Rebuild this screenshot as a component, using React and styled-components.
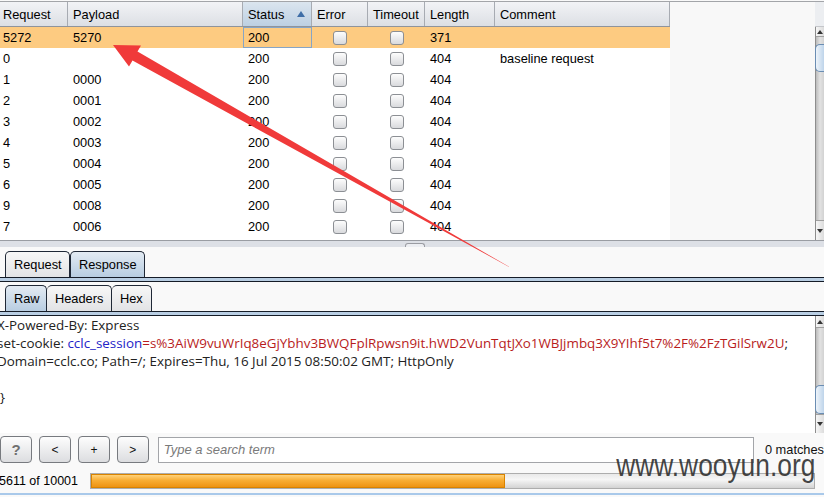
import React from 'react';
import styled, { createGlobalStyle } from 'styled-components';

const Global = createGlobalStyle`
  html, body { margin: 0; padding: 0; }
  body {
    width: 824px; height: 497px; overflow: hidden; background: #fafafa;
    font-family: "Liberation Sans", Arial, sans-serif;
  }
`;

const COLS = '68px 175px 69px 56px 57px 70px 175px';

const Frame = styled.div`
  position: relative;
  width: 824px;
  height: 497px;
  overflow: hidden;
  background: #f9f9f9;
  display: flex;
  flex-direction: column;
`;

const TopPane = styled.div`
  margin-top: 1px;
  height: 238px;
  border-top: 1px solid #a3a5a9;
  border-bottom: 1px solid #9a9da3;
  display: flex;
  flex-shrink: 0;
`;

const TableArea = styled.div`
  flex: 1;
  background: #f8f8f8;
  overflow: hidden;
`;

const Table = styled.div`
  width: 670px;
  background: #fff;
  height: 100%;
`;

const HeaderRow = styled.div`
  display: grid;
  grid-template-columns: ${COLS};
  height: 25px;
  box-sizing: border-box;
  border-bottom: 1px solid #8f949c;
`;

const HeadCell = styled.div`
  box-sizing: border-box;
  border-right: 1px solid #a7abb2;
  padding-left: ${p => p.$pl ?? 5}px;
  padding-right: 6px;
  font-size: 12.8px;
  color: #000;
  display: flex;
  align-items: center;
  justify-content: space-between;
  white-space: nowrap;
  overflow: hidden;
  background: ${p => p.$active
    ? 'linear-gradient(#dbe5ef, #bdd0e2)'
    : 'linear-gradient(#f2f3f6, #dcdfe4)'};
`;

const SortArrow = styled.span`
  width: 0; height: 0;
  border-left: 4px solid transparent;
  border-right: 4px solid transparent;
  border-bottom: 6px solid #3f6ea7;
`;

const Body = styled.div`
  height: 213px;
  overflow: hidden;
`;

const Row = styled.div`
  display: grid;
  grid-template-columns: ${COLS};
  height: 21px;
  background: ${p => (p.$selected ? '#fdcb81' : '#fff')};
`;

const Cell = styled.div`
  box-sizing: border-box;
  padding-left: ${p => p.$pl ?? 5}px;
  font-size: 12.8px;
  line-height: ${p => (p.$focus ? 19 : 21)}px;
  color: #000;
  white-space: nowrap;
  overflow: hidden;
  border: ${p => (p.$focus ? '1px solid #86a5c6' : 'none')};
  ${p => p.$focus && 'padding-left: 4px;'}
`;

const CheckCell = styled.div`
  display: flex;
  align-items: center;
  justify-content: center;
`;

const Checkbox = styled.div`
  width: 14px;
  height: 14px;
  box-sizing: border-box;
  border: 1px solid #8c8f94;
  border-radius: 3px;
  background: linear-gradient(#fdfdfd, #d9dadd);
`;

const VScroll = styled.div`
  width: 9px;
  flex-shrink: 0;
  display: flex;
  flex-direction: column;
  box-sizing: border-box;
  border-left: 1px solid #8d8d8d;
  background: linear-gradient(90deg, #bcbcbc, #e2e2e2 50%, #d2d2d2);
`;

const ScrollCorner = styled.div`
  height: 25px;
  background: #eceef1;
  border-bottom: 1px solid #c4c6ca;
  box-sizing: border-box;
  margin-left: -1px;
`;

const ScrollArrow = styled.div`
  height: ${p => p.$h}px;
  flex-shrink: 0;
  background: linear-gradient(90deg, #f6f6f6, #dcdcdc);
  display: flex;
  align-items: center;
  justify-content: center;
  box-sizing: border-box;
  ${p => (p.$down ? 'border-top: 1px solid #a0a0a0;' : 'border-bottom: 1px solid #a0a0a0;')}
`;

const ArrowGlyph = styled.div`
  width: 0; height: 0;
  border-left: 3px solid transparent;
  border-right: 3px solid transparent;
  ${p => (p.$down ? 'border-top: 4px solid #333;' : 'border-bottom: 4px solid #333;')}
`;

const Track = styled.div`
  flex: 1;
  padding-top: ${p => p.$offset}px;
`;

const Thumb = styled.div`
  height: ${p => p.$h}px;
  margin-left: -1px;
  box-sizing: border-box;
  border: 1px solid #6a8db3;
  border-right: none;
  border-radius: 5px 0 0 5px;
  background: linear-gradient(90deg, #eef4fa, #bed4ea);
`;

const Splitter = styled.div`
  height: 6px;
  flex-shrink: 0;
  background: #dde0e6;
  display: flex;
  align-items: flex-end;
  padding-left: 405px;
`;

const SplitHandle = styled.div`
  width: 18px;
  height: 3px;
  border: 1px solid #9a9ca2;
  border-bottom: none;
  border-radius: 3px 3px 0 0;
  background: #eceef2;
`;

const TabRow = styled.div`
  display: flex;
  padding-left: 5px;
  margin-top: ${p => p.$mt}px;
  height: 26px;
  flex-shrink: 0;
`;

const Tab = styled.div`
  width: ${p => p.$w}px;
  height: 26px;
  box-sizing: border-box;
  border: 1px solid #1f2836;
  border-bottom: none;
  ${p => (p.$joined ? 'border-left: none;' : '')}
  border-radius: 5px 5px 0 0;
  padding-left: 8px;
  font-size: 12.8px;
  line-height: 26px;
  color: #000;
  white-space: nowrap;
  background: ${p => (p.$active
    ? 'linear-gradient(#e3ebf3, #b8cde1)'
    : 'linear-gradient(#f7f7f7, #e2e3e5)')};
`;

const TabBand = styled.div`
  height: 5px;
  flex-shrink: 0;
  box-sizing: border-box;
  border-top: 1px solid #151c27;
  border-bottom: 1px solid #151c27;
  background: #b9cee3;
`;

const TextArea = styled.div`
  height: 117px;
  flex-shrink: 0;
  display: flex;
  background: #fff;
`;

const TextContent = styled.div`
  flex: 1;
  overflow: hidden;
  font-family: "Open Sans", "Noto Sans", sans-serif;
  font-size: 13.4px;
  line-height: 18px;
  color: #222;
  white-space: pre;
`;

const TextLine = styled.div`
  margin-left: ${p => (p.$flush ? 0 : -3)}px;
  height: 18px;
`;

const Key = styled.span`
  color: #2323c8;
`;

const Val = styled.span`
  color: #b81c1c;
`;

const Toolbar = styled.div`
  margin-top: 3px;
  height: 27px;
  flex-shrink: 0;
  display: flex;
  align-items: center;
  gap: 7px;
`;

const ToolButton = styled.div`
  width: 32px;
  height: 27px;
  box-sizing: border-box;
  border: 1px solid #777a7f;
  border-radius: 4px;
  background: linear-gradient(#fdfdfd, #dcdde0);
  display: flex;
  align-items: center;
  justify-content: center;
  font-size: ${p => (p.$help ? 15 : 12)}px;
  font-weight: ${p => (p.$help ? 'bold' : 'normal')};
  color: ${p => (p.$help ? '#707070' : '#111')};
`;

const SearchInput = styled.input`
  margin-left: 2px;
  width: 597px;
  height: 26px;
  box-sizing: border-box;
  border: 1px solid #a3a5a9;
  background: #fff;
  padding: 0 5px;
  font-family: "Liberation Sans", Arial, sans-serif;
  font-size: 13px;
  outline: none;
  &::placeholder { color: #7a7a7a; font-style: italic; }
`;

const Matches = styled.div`
  margin-left: 4px;
  font-size: 12.8px;
  color: #111;
  white-space: nowrap;
`;

const StatusRow = styled.div`
  margin-top: 10px;
  height: 16px;
  flex-shrink: 0;
  display: flex;
  align-items: center;
`;

const CountText = styled.div`
  width: 91px;
  margin-left: -1px;
  font-size: 12.5px;
  color: #000;
  white-space: nowrap;
`;

const ProgressBar = styled.div`
  flex: 1;
  margin-right: 9px;
  height: 16px;
  box-sizing: border-box;
  border: 1px solid #adadad;
  background: linear-gradient(#e9e9e9, #f6f6f6 40%, #d3d3d3);
  display: flex;
`;

const ProgressFill = styled.div`
  width: ${p => p.$pct}%;
  height: 100%;
  box-sizing: border-box;
  border: 1px solid #d98300;
  background: linear-gradient(#ffd27a, #f8ad34 45%, #ee9312);
`;

const BottomLine = styled.div`
  margin-top: 4px;
  height: 2px;
  background: #a9c9ea;
`;

const Watermark = styled.div`
  position: absolute;
  right: 9px;
  top: 450px;
  font-family: "Liberation Sans", Arial, sans-serif;
  font-size: 31px;
  line-height: 31px;
  color: rgba(44, 44, 44, 0.88);
  transform: scaleX(0.85);
  transform-origin: right center;
  white-space: nowrap;
  pointer-events: none;
`;

const Overlay = styled.svg`
  position: absolute;
  left: 0;
  top: 0;
  pointer-events: none;
`;

const rows = [
  { r: '5272', p: '5270', s: '200', l: '371', c: '', sel: true },
  { r: '0', p: '', s: '200', l: '404', c: 'baseline request' },
  { r: '1', p: '0000', s: '200', l: '404', c: '' },
  { r: '2', p: '0001', s: '200', l: '404', c: '' },
  { r: '3', p: '0002', s: '200', l: '404', c: '' },
  { r: '4', p: '0003', s: '200', l: '404', c: '' },
  { r: '5', p: '0004', s: '200', l: '404', c: '' },
  { r: '6', p: '0005', s: '200', l: '404', c: '' },
  { r: '9', p: '0008', s: '200', l: '404', c: '' },
  { r: '7', p: '0006', s: '200', l: '404', c: '' },
];

function Scrollbar({ corner, topH, offset, thumbH, bottomH }) {
  return (
    <VScroll>
      {corner && <ScrollCorner />}
      <ScrollArrow $h={topH}><ArrowGlyph /></ScrollArrow>
      <Track $offset={offset}><Thumb $h={thumbH} /></Track>
      <ScrollArrow $h={bottomH} $down><ArrowGlyph $down /></ScrollArrow>
    </VScroll>
  );
}

export default function App() {
  return (
    <Frame>
      <Global />
      <TopPane>
        <TableArea>
          <Table>
            <HeaderRow>
              <HeadCell $pl={3}>Request</HeadCell>
              <HeadCell>Payload</HeadCell>
              <HeadCell $active>Status<SortArrow /></HeadCell>
              <HeadCell>Error</HeadCell>
              <HeadCell>Timeout</HeadCell>
              <HeadCell>Length</HeadCell>
              <HeadCell>Comment</HeadCell>
            </HeaderRow>
            <Body>
              {rows.map((row, i) => (
                <Row key={i} $selected={row.sel}>
                  <Cell $pl={3}>{row.r}</Cell>
                  <Cell>{row.p}</Cell>
                  <Cell $focus={row.sel}>{row.s}</Cell>
                  <CheckCell><Checkbox /></CheckCell>
                  <CheckCell><Checkbox /></CheckCell>
                  <Cell>{row.l}</Cell>
                  <Cell>{row.c}</Cell>
                </Row>
              ))}
            </Body>
          </Table>
        </TableArea>
        <Scrollbar corner topH={10} offset={7} thumbH={28} bottomH={20} />
      </TopPane>

      <Splitter><SplitHandle /></Splitter>

      <TabRow $mt={4}>
        <Tab $w={65}>Request</Tab>
        <Tab $w={75} $active>Response</Tab>
      </TabRow>
      <TabBand />

      <TabRow $mt={3}>
        <Tab $w={42} $active>Raw</Tab>
        <Tab $w={65} $joined>Headers</Tab>
        <Tab $w={40} $joined>Hex</Tab>
      </TabRow>
      <TabBand />

      <TextArea>
        <TextContent>
          <TextLine>X-Powered-By: Express</TextLine>
          <TextLine>
            set-cookie: <Key>cclc_session</Key>
            <Val>=s%3AiW9vuWrIq8eGjYbhv3BWQFplRpwsn9it.hWD2VunTqtJXo1WBJjmbq3X9YIhf5t7%2F%2FzTGilSrw2U</Val>;
          </TextLine>
          <TextLine>Domain=cclc.co; Path=/; Expires=Thu, 16 Jul 2015 08:50:02 GMT; HttpOnly</TextLine>
          <TextLine />
          <TextLine $flush>{'}'}</TextLine>
        </TextContent>
        <Scrollbar topH={12} offset={57} thumbH={29} bottomH={19} />
      </TextArea>

      <Toolbar>
        <ToolButton $help>?</ToolButton>
        <ToolButton>&lt;</ToolButton>
        <ToolButton>+</ToolButton>
        <ToolButton>&gt;</ToolButton>
        <SearchInput placeholder="Type a search term" />
        <Matches>0 matches</Matches>
      </Toolbar>

      <StatusRow>
        <CountText>5611 of 10001</CountText>
        <ProgressBar>
          <ProgressFill $pct={57.2} />
        </ProgressBar>
      </StatusRow>
      <BottomLine />

      <Watermark>www.wooyun.org</Watermark>

      <Overlay width="824" height="497" viewBox="0 0 824 497">
        <polygon
          points="113,45 129,66.5 132.5,60.6 514,269.6 137.5,51.6 141,45.5"
          fill="#f03a3a"
        />
      </Overlay>
    </Frame>
  );
}
